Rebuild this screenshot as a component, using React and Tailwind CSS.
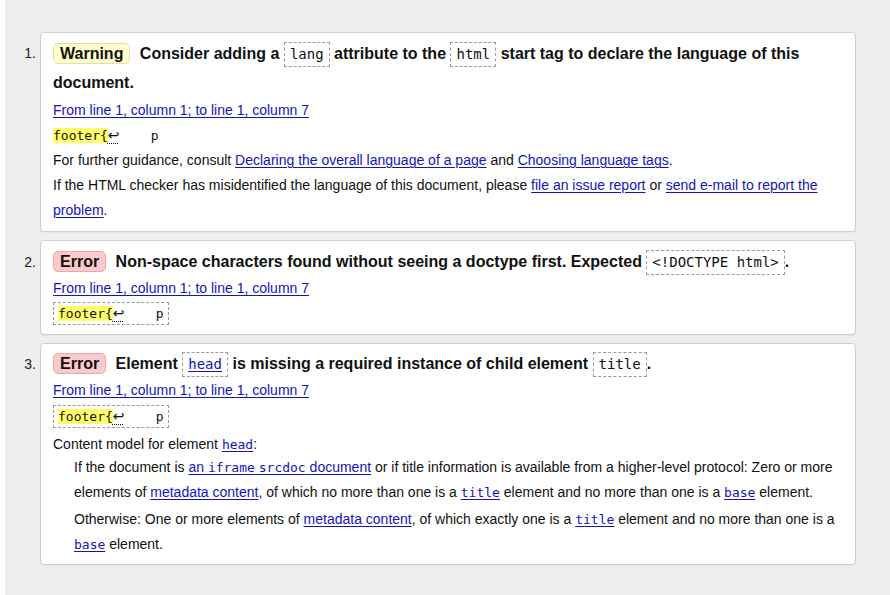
import React from "react";

const A = ({ children }) => (
  <a href="#" className="text-[#1414b8] underline decoration-[1px] underline-offset-[2px]">
    {children}
  </a>
);

const TCode = ({ children }) => (
  <code className="inline-block font-['DejaVu_Sans_Mono',monospace] font-normal text-[14px] leading-[17px] px-[5px] py-[3px] border border-dashed border-[#9a9a9a]">
    {children}
  </code>
);

const BCode = ({ children }) => (
  <code className="font-['DejaVu_Sans_Mono',monospace] text-[13px]">{children}</code>
);

const Extract = ({ boxed, extra = "" }) => (
  <div className={"leading-[25px] " + extra}>
    <code
      className={
        boxed
          ? "inline-block whitespace-pre font-['DejaVu_Sans_Mono',monospace] text-[13px] leading-[18px] px-[4px] py-[1px] border border-dashed border-[#9a9a9a]"
          : "whitespace-pre font-['DejaVu_Sans_Mono',monospace] text-[13px]"
      }
    >
      <span className="bg-[#ffff6a]">footer{"{"}</span>
      <span className="font-['DejaVu_Sans',sans-serif] text-[14px] underline decoration-dotted decoration-[1px] underline-offset-[3px]">↩</span>
      {"    p"}
    </code>
  </div>
);

const Badge = ({ kind }) =>
  kind === "warning" ? (
    <span className="inline-block mr-[5px] px-[6px] py-[1px] leading-[17px] rounded-[5px] border border-[#e8dfa6] bg-[#ffffcc]">
      Warning
    </span>
  ) : (
    <span className="inline-block mr-[5px] px-[6px] py-[1px] leading-[17px] rounded-[5px] border border-[#eaa9a9] bg-[#fbcaca]">
      Error
    </span>
  );

function Item({ n, numClass, cardClass, children }) {
  return (
    <li className="flex">
      <div className={"w-[35px] shrink-0 text-right pr-[4px] text-[14px] text-[#222] " + numClass}>{n}.</div>
      <div
        className={
          "flex-1 bg-white border border-[#cfcfcf] rounded-[4px] px-[12px] shadow-[0_1px_1px_rgba(0,0,0,0.04)] " +
          cardClass
        }
      >
        {children}
      </div>
    </li>
  );
}

export default function App() {
  return (
    <div className="bg-white min-h-[595px] font-['Liberation_Sans',Arial,sans-serif] text-[#111]">
      <div className="ml-[5px] bg-[#eeeeee] min-h-[595px] pt-[32px] pr-[34px]">
        <ol className="flex flex-col gap-[8px] text-[14px]">
          <Item n={1} numClass="pt-[7px] leading-[29px]" cardClass="pt-[6px] pb-[8px]">
            <p className="text-[16px] font-bold leading-[29px]">
              <Badge kind="warning" /> Consider adding a <TCode>lang</TCode> attribute to the{" "}
              <TCode>html</TCode> start tag to declare the language of this document.
            </p>
            <p className="leading-[25px] mt-[1px]">
              <A>From line 1, column 1; to line 1, column 7</A>
            </p>
            <Extract />
            <p className="leading-[25px]">
              For further guidance, consult <A>Declaring the overall language of a page</A> and{" "}
              <A>Choosing language tags</A>.
            </p>
            <p className="leading-[25px]">
              If the HTML checker has misidentified the language of this document, please{" "}
              <A>file an issue report</A> or <A>send e-mail to report the problem</A>.
            </p>
          </Item>

          <Item n={2} numClass="pt-[8px] leading-[28px]" cardClass="pt-[7px] pb-[8px]">
            <p className="text-[16px] font-bold leading-[28px]">
              <Badge kind="error" /> Non-space characters found without seeing a doctype first. Expected{" "}
              <TCode>{"<!DOCTYPE html>"}</TCode>.
            </p>
            <p className="leading-[25px]">
              <A>From line 1, column 1; to line 1, column 7</A>
            </p>
            <Extract boxed />
          </Item>

          <Item n={3} numClass="pt-[7px] leading-[28px]" cardClass="pt-[6px] pb-[7px]">
            <p className="text-[16px] font-bold leading-[28px]">
              <Badge kind="error" /> Element{" "}
              <code className="inline-block font-['DejaVu_Sans_Mono',monospace] font-normal text-[14px] leading-[17px] px-[5px] py-[3px] border border-dashed border-[#9a9a9a]">
                <A>head</A>
              </code>{" "}
              is missing a required instance of child element <TCode>title</TCode>.
            </p>
            <p className="leading-[25px]">
              <A>From line 1, column 1; to line 1, column 7</A>
            </p>
            <Extract boxed extra="mt-[1px]" />
            <p className="mt-[5px] leading-[20px]">
              Content model for element{" "}
              <A>
                <BCode>head</BCode>
              </A>
              :
            </p>
            <div className="pl-[21px]">
              <p className="leading-[25px]">
                If the document is{" "}
                <A>
                  an <BCode>iframe</BCode> <BCode>srcdoc</BCode> document
                </A>{" "}
                or if title information is available from a higher-level protocol: Zero or more elements of{" "}
                <A>metadata content</A>, of which no more than one is a{" "}
                <A>
                  <BCode>title</BCode>
                </A>{" "}
                element and no more than one is a{" "}
                <A>
                  <BCode>base</BCode>
                </A>{" "}
                element.
              </p>
              <p className="mt-[2px] leading-[25px]">
                Otherwise: One or more elements of <A>metadata content</A>, of which exactly one is a{" "}
                <A>
                  <BCode>title</BCode>
                </A>{" "}
                element and no more than one is a{" "}
                <A>
                  <BCode>base</BCode>
                </A>{" "}
                element.
              </p>
            </div>
          </Item>
        </ol>
      </div>
    </div>
  );
}
